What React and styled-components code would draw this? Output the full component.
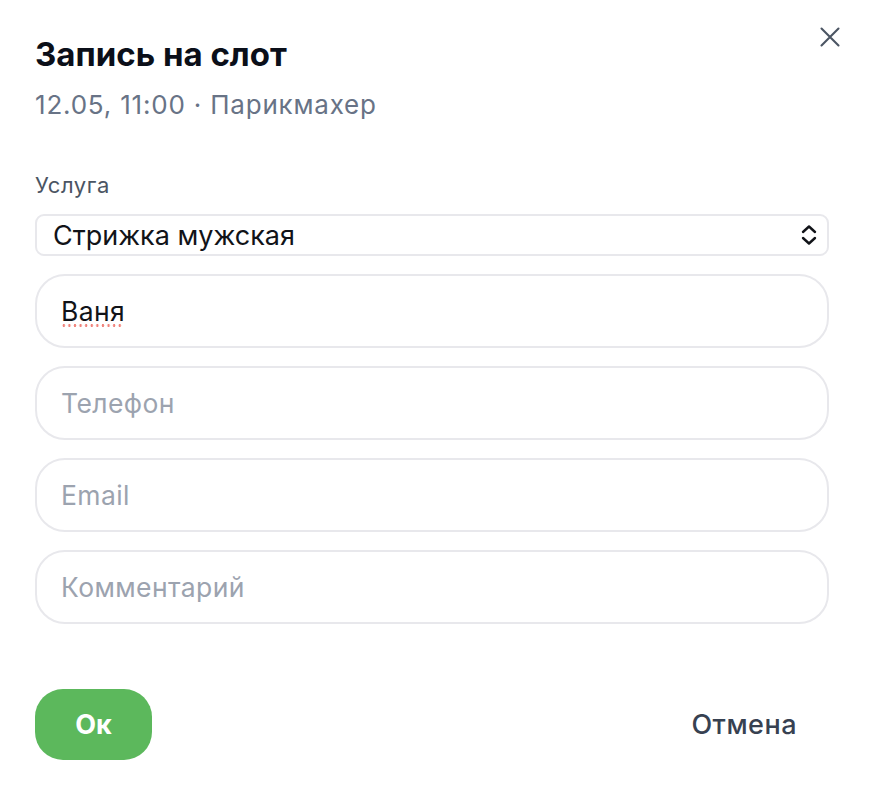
import React from "react";
import styled, { createGlobalStyle } from "styled-components";

const Global = createGlobalStyle`
  html, body { margin: 0; padding: 0; background: #ffffff; }
  body { font-family: Inter, "Noto Sans", "Liberation Sans", sans-serif; }
  * { box-sizing: border-box; }
`;

const Dialog = styled.div`
  width: 870px;
  padding: 34px 41px 0 35px;
  display: flex;
  flex-direction: column;
`;

const Header = styled.div`
  display: flex;
  justify-content: space-between;
  align-items: flex-start;
`;

const Titles = styled.div`
  display: flex;
  flex-direction: column;
  gap: 15px;
`;

const Title = styled.h1`
  margin: 0;
  font-size: 33px;
  line-height: 40px;
  font-weight: 700;
  color: #0b0f19;
  letter-spacing: 0;
`;

const Subtitle = styled.div`
  font-size: 26px;
  line-height: 32px;
  color: #687386;
  letter-spacing: 0.8px;
`;

const Close = styled.button`
  border: 0;
  background: none;
  padding: 0;
  margin: -9px -13px 0 0;
  width: 24px;
  height: 24px;
  display: flex;
  align-items: center;
  justify-content: center;
  color: #4b5563;
  cursor: pointer;
`;

const Form = styled.div`
  margin-top: 50px;
  display: flex;
  flex-direction: column;
  gap: 18px;
`;

const Field = styled.div`
  display: flex;
  flex-direction: column;
  gap: 15px;
`;

const Label = styled.label`
  font-size: 22px;
  line-height: 28px;
  color: #4b5563;
  letter-spacing: 0.6px;
`;

const SelectWrap = styled.div`
  position: relative;
  height: 42px;
`;

const Select = styled.select`
  appearance: none;
  width: 100%;
  height: 42px;
  border: 2px solid #e8e8ec;
  border-radius: 9px;
  background: #fff;
  padding: 0 40px 0 16px;
  font-family: inherit;
  font-size: 27px;
  color: #111318;
  outline: none;
`;

const Chevron = styled.svg`
  position: absolute;
  right: 12px;
  top: 10px;
  pointer-events: none;
`;

const InputWrap = styled.div`
  position: relative;
`;

const Input = styled.input`
  display: block;
  width: 100%;
  height: 74px;
  border: 2px solid #e8e8ec;
  border-radius: 30px;
  background: #fff;
  padding: 0 24px;
  font-family: inherit;
  font-size: 26.5px;
  letter-spacing: 0.4px;
  color: #111318;
  outline: none;
  &::placeholder { color: #9ca3af; }
`;

const Squiggle = styled.span`
  position: absolute;
  left: 26px;
  top: 50px;
  width: ${(p) => p.$width}px;
  height: 3px;
  background-image: radial-gradient(circle, #f0837b 1.1px, transparent 1.5px);
  background-size: 5.6px 3px;
  pointer-events: none;
`;

const Actions = styled.div`
  margin-top: 65px;
  display: flex;
  justify-content: space-between;
  align-items: center;
`;

const OkButton = styled.button`
  width: 117px;
  height: 71px;
  border: 0;
  border-radius: 28px;
  background: #5cb85c;
  color: #fff;
  font-family: inherit;
  font-size: 27px;
  font-weight: 700;
  cursor: pointer;
`;

const CancelButton = styled.button`
  border: 0;
  background: none;
  padding: 0 32px 0 0;
  color: #374151;
  font-family: inherit;
  font-size: 27px;
  letter-spacing: 0.5px;
  font-weight: 500;
  cursor: pointer;
`;

export default function App() {
  return (
    <>
      <Global />
      <Dialog>
        <Header>
          <Titles>
            <Title>Запись на слот</Title>
            <Subtitle>12.05, 11:00 · Парикмахер</Subtitle>
          </Titles>
          <Close aria-label="Закрыть">
            <svg width="20" height="20" viewBox="0 0 20 20" fill="none">
              <path d="M1.5 1.5L18.5 18.5M18.5 1.5L1.5 18.5" stroke="currentColor" strokeWidth="2.1" strokeLinecap="round" />
            </svg>
          </Close>
        </Header>
        <Form>
          <Field>
            <Label>Услуга</Label>
            <SelectWrap>
              <Select defaultValue="m">
                <option value="m">Стрижка мужская</option>
              </Select>
              <Chevron width="16" height="22" viewBox="0 0 16 22" fill="none">
                <path d="M2 8L8 2.5L14 8" stroke="#111318" strokeWidth="2.4" strokeLinecap="round" strokeLinejoin="round" />
                <path d="M2 14L8 19.5L14 14" stroke="#111318" strokeWidth="2.4" strokeLinecap="round" strokeLinejoin="round" />
              </Chevron>
            </SelectWrap>
          </Field>
          <InputWrap>
            <Input defaultValue="Ваня" spellCheck={false} />
            <Squiggle $width={62} />
          </InputWrap>
          <Input placeholder="Телефон" />
          <Input placeholder="Email" />
          <Input placeholder="Комментарий" />
        </Form>
        <Actions>
          <OkButton>Ок</OkButton>
          <CancelButton>Отмена</CancelButton>
        </Actions>
      </Dialog>
    </>
  );
}
